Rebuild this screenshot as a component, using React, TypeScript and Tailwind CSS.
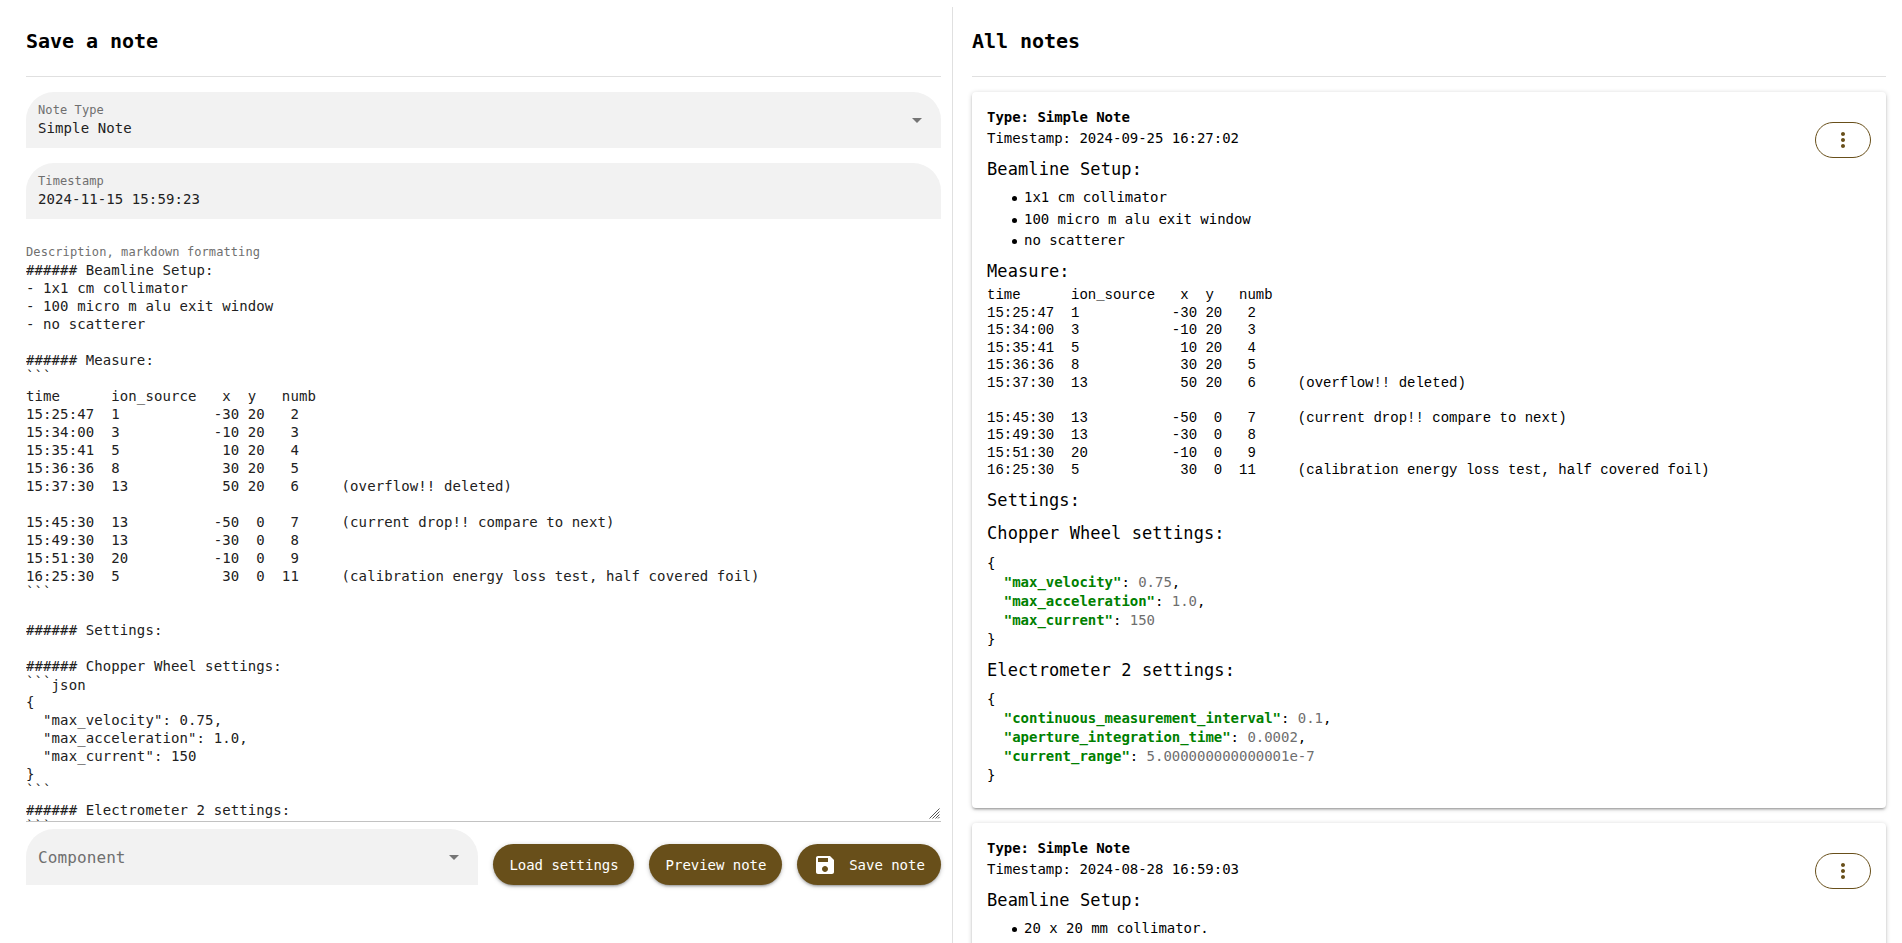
import React from "react";

const MARKDOWN = `###### Beamline Setup:
- 1x1 cm collimator
- 100 micro m alu exit window
- no scatterer

###### Measure:
\`\`\`
time      ion_source   x  y   numb
15:25:47  1           -30 20   2
15:34:00  3           -10 20   3
15:35:41  5            10 20   4
15:36:36  8            30 20   5
15:37:30  13           50 20   6     (overflow!! deleted)

15:45:30  13          -50  0   7     (current drop!! compare to next)
15:49:30  13          -30  0   8
15:51:30  20          -10  0   9
16:25:30  5            30  0  11     (calibration energy loss test, half covered foil)
\`\`\`

###### Settings:

###### Chopper Wheel settings:
\`\`\`json
{
  "max_velocity": 0.75,
  "max_acceleration": 1.0,
  "max_current": 150
}
\`\`\`
###### Electrometer 2 settings:
\`\`\``;

const TABLE = `time      ion_source   x  y   numb
15:25:47  1           -30 20   2
15:34:00  3           -10 20   3
15:35:41  5            10 20   4
15:36:36  8            30 20   5
15:37:30  13           50 20   6     (overflow!! deleted)

15:45:30  13          -50  0   7     (current drop!! compare to next)
15:49:30  13          -30  0   8
15:51:30  20          -10  0   9
16:25:30  5            30  0  11     (calibration energy loss test, half covered foil)`;

function Arrow() {
  return (
    <svg viewBox="0 0 24 24" className="size-6 shrink-0 fill-[#757575]">
      <path d="M7 10l5 5 5-5z" />
    </svg>
  );
}

function Title({ children }: { children: React.ReactNode }) {
  return (
    <h1 className="h-[77px] shrink-0 border-b border-[#e0e0e0] pt-[25px] text-[20px] font-bold leading-8 tracking-[-0.04px] text-black">
      {children}
    </h1>
  );
}

function Field({ label, value, arrow }: { label: string; value: string; arrow?: boolean }) {
  return (
    <div className="flex h-14 items-center justify-between rounded-t-[28px] bg-[#f2f2f2] px-3">
      <div className="flex h-full flex-col pt-[9px]">
        <span className="text-xs leading-[18px] tracking-[0.09px] text-[#6f6f6f]">{label}</span>
        <span className="text-sm leading-[18px] tracking-[0.1px] text-[#212121]">{value}</span>
      </div>
      {arrow && <Arrow />}
    </div>
  );
}

function Button({ children, className }: { children: React.ReactNode; className: string }) {
  return (
    <button
      className={
        "flex h-[41px] shrink-0 items-center justify-center rounded-[28px] bg-[#684f1a] text-sm tracking-[-0.03px] text-white shadow-[0_1px_5px_rgba(0,0,0,0.2),0_2px_2px_rgba(0,0,0,0.14),0_3px_1px_-2px_rgba(0,0,0,0.12)] " +
        className
      }
    >
      {children}
    </button>
  );
}

function Source({ text }: { text: string }) {
  return (
    <pre className="font-['DejaVu_Sans_Mono','Liberation_Mono',monospace] text-sm leading-[18px] tracking-[0.1px] text-[#212121]">
      {text.split("\n").map((line, i) => (
        <div key={i} className="h-[18px]">
          {line.startsWith("```") ? (
            <>
              <span className="align-[3px] leading-none">```</span>
              {line.slice(3)}
            </>
          ) : (
            line
          )}
        </div>
      ))}
    </pre>
  );
}

function Heading({ children, className }: { children: React.ReactNode; className: string }) {
  return <h6 className={"text-[17px] leading-7 tracking-[0.1px] " + className}>{children}</h6>;
}

function Bullets({ items }: { items: string[] }) {
  return (
    <ul className="mt-[4.3px]">
      {items.map((item) => (
        <li key={item} className="flex h-[21.33px] items-center pl-[25px] leading-[21px]">
          <span className="mr-[7px] mt-0.5 size-[5px] rounded-full bg-black" />
          {item}
        </li>
      ))}
    </ul>
  );
}

function Json({ entries, className }: { entries: [string, string][]; className: string }) {
  return (
    <div className={"whitespace-pre leading-[19px] " + className}>
      <div>{"{"}</div>
      {entries.map(([key, value], i) => (
        <div key={key}>
          {"  "}
          <span className="font-bold text-[#008000]">{`"${key}"`}</span>:{" "}
          <span className="text-[#6e6e6e]">{value}</span>
          {i < entries.length - 1 && ","}
        </div>
      ))}
      <div>{"}"}</div>
    </div>
  );
}

function Card({
  timestamp,
  className,
  children,
}: {
  timestamp: string;
  className: string;
  children: React.ReactNode;
}) {
  return (
    <article
      className={
        "relative h-[716px] shrink-0 rounded bg-white px-[15px] pt-[15px] text-sm tracking-[-0.03px] text-black shadow-[0_1px_5px_rgba(0,0,0,0.2),0_2px_2px_rgba(0,0,0,0.14),0_3px_1px_-2px_rgba(0,0,0,0.12)] " +
        className
      }
    >
      <div className="font-bold leading-[21px]">Type: Simple Note</div>
      <div className="leading-[21px]">Timestamp: {timestamp}</div>
      {children}
      <button className="absolute right-[15px] top-[30px] flex h-9 w-14 items-center justify-center rounded-[18px] border border-[#684f1a]">
        <svg viewBox="0 0 24 24" className="size-6 fill-[#684f1a]">
          <path d="M12 8c1.1 0 2-.9 2-2s-.9-2-2-2-2 .9-2 2 .9 2 2 2zm0 2c-1.1 0-2 .9-2 2s.9 2 2 2 2-.9 2-2-.9-2-2-2zm0 6c-1.1 0-2 .9-2 2s.9 2 2 2 2-.9 2-2-.9-2-2-2z" />
        </svg>
      </button>
    </article>
  );
}

export default function App() {
  return (
    <div className="flex h-screen w-full overflow-hidden bg-white font-['DejaVu_Sans_Mono','Liberation_Mono',monospace]">
      <section className="h-full w-[952px] shrink-0 pl-[26px] pr-[11px]">
        <Title>Save a note</Title>
        <div className="mt-[15px] flex flex-col gap-[15px]">
          <Field label="Note Type" value="Simple Note" arrow />
          <Field label="Timestamp" value="2024-11-15 15:59:23" />
        </div>
        <div className="relative mt-[24px] h-[579px] overflow-hidden border-b border-[#c2c2c2]">
          <div className="text-xs leading-[18px] tracking-[0.09px] text-[#6f6f6f]">
            Description, markdown formatting
          </div>
          <Source text={MARKDOWN} />
          <svg
            viewBox="0 0 11 11"
            className="absolute bottom-[2px] right-px size-[11px] fill-none stroke-[#555]"
          >
            <path d="M.5 10.5l10-10M3.5 10.5l7-7M6.5 10.5l4-4M9 10.5l1.5-1.5" />
          </svg>
        </div>
        <div className="mt-[7px] flex items-end gap-[15px]">
          <div className="flex h-14 flex-1 items-center justify-between rounded-t-[28px] bg-[#f2f2f2] px-3 text-base tracking-[0.1px] text-[#6f6f6f]">
            <span className="pt-0.5">Component</span>
            <Arrow />
          </div>
          <Button className="w-[141px] pl-px">Load settings</Button>
          <Button className="w-[133px] pl-px">Preview note</Button>
          <Button className="w-[144px]">
            <svg viewBox="0 0 24 24" className="mr-3 size-6 fill-white">
              <path d="M17 3H5c-1.11 0-2 .9-2 2v14c0 1.1.89 2 2 2h14c1.1 0 2-.9 2-2V7l-4-4zm-5 16c-1.66 0-3-1.34-3-3s1.34-3 3-3 3 1.34 3 3-1.34 3-3 3zm3-10H5V5h10v4z" />
            </svg>
            Save note
          </Button>
        </div>
      </section>
      <div className="mt-[7px] w-px shrink-0 bg-[#e0e0e0]" />
      <section className="flex h-full flex-1 flex-col pl-[19px] pr-4">
        <Title>All notes</Title>
        <Card timestamp="2024-09-25 16:27:02" className="mt-[15px]">
          <Heading className="mt-1.5">Beamline Setup:</Heading>
          <Bullets items={["1x1 cm collimator", "100 micro m alu exit window", "no scatterer"]} />
          <Heading className="mt-[5.7px]">Measure:</Heading>
          <pre className="mt-[2.1px] font-['Liberation_Mono',monospace] text-sm leading-[17.5px] tracking-normal">
            {TABLE}
          </pre>
          <Heading className="mt-[6.4px]">Settings:</Heading>
          <Heading className="mt-[5px]">Chopper Wheel settings:</Heading>
          <Json
            className="mt-[7px]"
            entries={[
              ["max_velocity", "0.75"],
              ["max_acceleration", "1.0"],
              ["max_current", "150"],
            ]}
          />
          <Heading className="mt-[7px]">Electrometer 2 settings:</Heading>
          <Json
            className="mt-[6px]"
            entries={[
              ["continuous_measurement_interval", "0.1"],
              ["aperture_integration_time", "0.0002"],
              ["current_range", "5.000000000000001e-7"],
            ]}
          />
        </Card>
        <Card timestamp="2024-08-28 16:59:03" className="mt-[15px]">
          <Heading className="mt-1.5">Beamline Setup:</Heading>
          <Bullets items={["20 x 20 mm collimator."]} />
        </Card>
      </section>
    </div>
  );
}
